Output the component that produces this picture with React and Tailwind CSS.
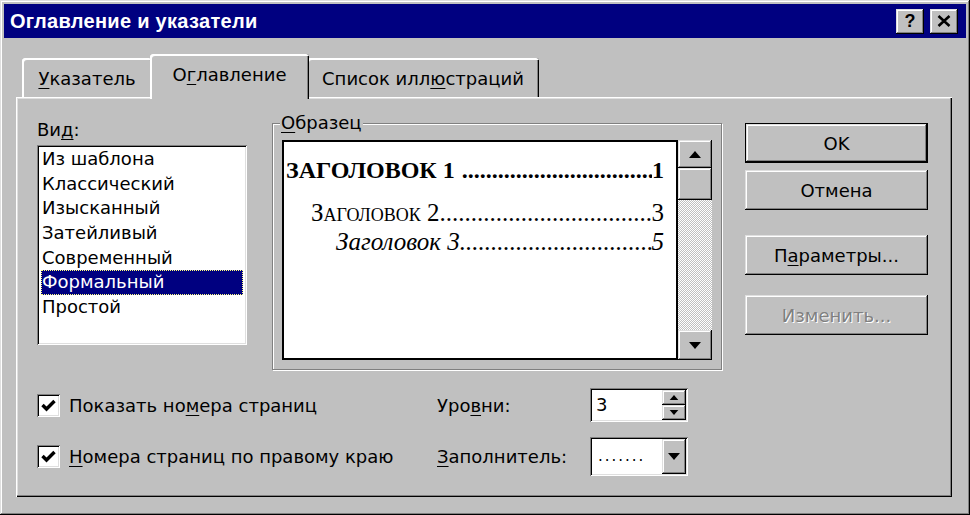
import React from 'react';

const raised =
  "bg-[#c0c0c0] shadow-[inset_-1px_-1px_0_#000,inset_1px_1px_0_#dfdfdf,inset_-2px_-2px_0_#808080,inset_2px_2px_0_#fff]";
const sunken =
  "shadow-[inset_1px_1px_0_#808080,inset_-1px_-1px_0_#fff,inset_2px_2px_0_#000,inset_-2px_-2px_0_#dfdfdf]";
const ui = "font-['DejaVu_Sans',sans-serif] text-[18px] text-black";

function Key({ children }) {
  return <span className="underline decoration-1 underline-offset-[3px]">{children}</span>;
}

function Tri({ up = false, w = 12, h = 7 }) {
  return (
    <svg width={w} height={h} viewBox="0 0 12 7">
      {up ? <polygon points="6,0 12,7 0,7" fill="#000" /> : <polygon points="0,0 12,0 6,7" fill="#000" />}
    </svg>
  );
}

function Tab({ children, active, width }) {
  if (active) {
    return (
      <div
        className={`relative z-10 -mx-[2px] -mb-[2px] h-[45px] ${width} rounded-t-[3px] bg-[#c0c0c0] shadow-[inset_2px_2px_0_#fff,inset_-1px_0_0_#000,inset_-2px_0_0_#808080] flex items-center justify-center pb-[4px]`}
      >
        {children}
      </div>
    );
  }
  return (
    <div
      className={`h-[39px] ${width} rounded-t-[3px] bg-[#c0c0c0] shadow-[inset_2px_2px_0_#fff,inset_-1px_0_0_#000,inset_-2px_0_0_#808080] flex items-center justify-center pt-[1px]`}
    >
      {children}
    </div>
  );
}

function Button({ children, primary, disabled, className = '' }) {
  return (
    <div className={`h-[40px] ${primary ? 'border border-black' : ''} ${className}`}>
      <div
        className={`h-full w-full ${raised} flex items-center justify-center ${
          disabled ? 'text-[#808080] [text-shadow:1px_1px_0_#fff]' : ''
        }`}
      >
        {children}
      </div>
    </div>
  );
}

function Checkbox() {
  return (
    <div className={`w-[23px] h-[23px] bg-white ${sunken} flex items-center justify-center`}>
      <svg width="15" height="13" viewBox="0 0 15 13">
        <path d="M1.5 6 L5.5 10 L13.5 2" stroke="#000" strokeWidth="3.4" fill="none" />
      </svg>
    </div>
  );
}

function Leader({ left, num, className, pl, gap = '' }) {
  return (
    <div className={`flex items-baseline ${pl} pr-[12px] ${className}`}>
      <span className="whitespace-nowrap">{left}</span>
      <span className={`flex-1 w-0 min-w-0 overflow-hidden whitespace-nowrap ${gap}`}>{'.'.repeat(160)}</span>
      <span>{num}</span>
    </div>
  );
}

const styles = ['Из шаблона', 'Классический', 'Изысканный', 'Затейливый', 'Современный', 'Формальный', 'Простой'];

export default function App() {
  return (
    <div className={`w-[970px] h-[515px] p-[4px] flex flex-col ${raised} ${ui}`}>
      {/* title bar */}
      <div className="h-[34px] bg-[#000080] flex items-center pl-[6px] pr-[8px]">
        <span className="flex-1 font-['Liberation_Sans',sans-serif] font-bold text-[20px] text-white tracking-[0.3px]">
          Оглавление и указатели
        </span>
        <div className={`w-[28px] h-[25px] ${raised} flex items-center justify-center font-['Liberation_Sans',sans-serif] font-bold text-[18px] leading-none`}>
          ?
        </div>
        <div className={`ml-[6px] w-[28px] h-[25px] ${raised} flex items-center justify-center`}>
          <svg width="14" height="12" viewBox="0 0 14 12">
            <path d="M1.5 1 L12.5 11 M12.5 1 L1.5 11" stroke="#000" strokeWidth="2.6" />
          </svg>
        </div>
      </div>

      <div className="flex-1 pl-[12px] pr-[14px] pt-[16px]">
        {/* tabs */}
        <div className="h-[43px] flex items-end pl-[6px]">
          <Tab width="w-[130px]">
            <span><Key>У</Key>казатель</span>
          </Tab>
          <Tab active width="w-[159px]">
            <span>О<Key>г</Key>лавление</span>
          </Tab>
          <Tab width="w-[232px]">
            <span>Список илл<Key>ю</Key>страций</span>
          </Tab>
        </div>

        {/* panel */}
        <div className="h-[400px] pl-[21px] pt-[22px] bg-[#c0c0c0] shadow-[inset_1px_1px_0_#fff,inset_-1px_-1px_0_#000,inset_-2px_-2px_0_#808080,inset_2px_2px_0_#dfdfdf]">
          <div className="flex items-start">
            {/* list */}
            <div className="w-[210px] shrink-0">
              <div className="h-[26px] leading-[22px]">
                Ви<Key>д</Key>:
              </div>
              <div className={`h-[200px] bg-white ${sunken} pt-[2px] px-[4px]`}>
                {styles.map((s) => (
                  <div
                    key={s}
                    className={`h-[24.7px] leading-[24.7px] pl-[1px] whitespace-nowrap ${
                      s === 'Формальный'
                        ? 'bg-[#000080] text-white outline-1 outline-dotted outline-[#ffff80] -outline-offset-1'
                        : ''
                    }`}
                  >
                    {s}
                  </div>
                ))}
              </div>
            </div>

            {/* sample group */}
            <div className="relative shrink-0 ml-[25px] mt-[4px] w-[450px] h-[247px] border border-[#808080] shadow-[1px_1px_0_#fff,inset_1px_1px_0_#fff]">
              <span className="absolute left-[7px] -top-[12px] px-[1px] bg-[#c0c0c0] leading-[22px]">
                <Key>О</Key>бразец
              </span>
              <div className="mt-[16px] ml-[9px] w-[430px] h-[220px] flex">
                <div className="flex-1 min-w-0 overflow-hidden bg-white border-2 border-black pt-[13px] font-['Liberation_Serif',serif]">
                  <Leader
                    pl="pl-[2px]"
                    gap="ml-[7px]"
                    className="font-bold text-[24px] leading-[30px]"
                    left="ЗАГОЛОВОК 1"
                    num="1"
                  />
                  <Leader
                    pl="pl-[27px]"
                    className="mt-[15px] text-[25px] leading-[26px] [font-variant:small-caps]"
                    left="Заголовок 2"
                    num="3"
                  />
                  <Leader
                    pl="pl-[52px]"
                    className="mt-[3px] italic text-[25px] leading-[26px]"
                    left="Заголовок 3"
                    num="5"
                  />
                </div>
                <div className="w-[34px] shrink-0 flex flex-col">
                  <div className={`h-[28px] ${raised} flex items-center justify-center`}>
                    <Tri up />
                  </div>
                  <div className={`h-[32px] ${raised}`} />
                  <div className="flex-1 bg-[repeating-conic-gradient(#c0c0c0_0_25%,#ffffff_0_50%)] bg-[length:2px_2px]" />
                  <div className={`h-[30px] ${raised} flex items-center justify-center`}>
                    <Tri />
                  </div>
                </div>
              </div>
            </div>

            {/* buttons */}
            <div className="ml-[23px] mt-[4px] w-[183px] shrink-0 flex flex-col">
              <Button primary>OK</Button>
              <Button className="mt-[7px]">Отмена</Button>
              <Button className="mt-[25px]">
                <span>П<Key>а</Key>раметры...</span>
              </Button>
              <Button className="mt-[20px]" disabled>
                Изменить...
              </Button>
            </div>
          </div>

          {/* options */}
          <div className="mt-[18px] h-[34px] flex items-center">
            <div className="w-[400px] flex items-center">
              <Checkbox />
              <span className="ml-[9px]">
                Показать но<Key>м</Key>ера страниц
              </span>
            </div>
            <div className="w-[153px]">
              Уро<Key>в</Key>ни:
            </div>
            <div className={`w-[98px] h-[34px] bg-white ${sunken} flex p-[2px]`}>
              <span className="flex-1 pl-[4px] leading-[30px]">3</span>
              <div className="w-[24px] flex flex-col">
                <div className={`flex-1 ${raised} flex items-center justify-center`}>
                  <Tri up w={10} h={5} />
                </div>
                <div className={`flex-1 ${raised} flex items-center justify-center`}>
                  <Tri w={10} h={5} />
                </div>
              </div>
            </div>
          </div>

          <div className="mt-[15px] h-[39px] flex items-center">
            <div className="w-[400px] flex items-center">
              <Checkbox />
              <span className="ml-[9px]">
                <Key>Н</Key>омера страниц по правому краю
              </span>
            </div>
            <div className="w-[153px]">
              <Key>З</Key>аполнитель:
            </div>
            <div className={`w-[98px] h-[39px] bg-white ${sunken} flex p-[2px]`}>
              <span className="flex-1 pl-[6px] leading-[35px] text-[15px] tracking-[2px]">.......</span>
              <div className={`w-[24px] ${raised} flex items-center justify-center`}>
                <Tri />
              </div>
            </div>
          </div>
        </div>
      </div>
    </div>
  );
}
